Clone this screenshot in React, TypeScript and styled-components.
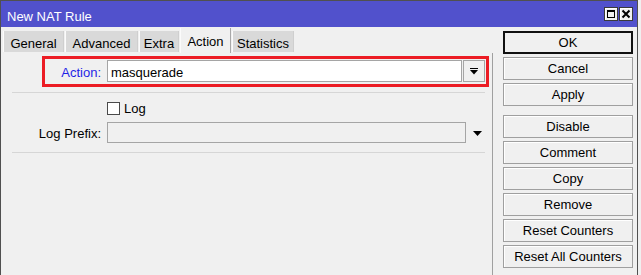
import * as React from "react";
import styled, { createGlobalStyle } from "styled-components";

const GlobalStyle = createGlobalStyle`
  html, body {
    margin: 0;
    padding: 0;
    background: #f0f0f0;
  }
  body {
    font: 400 13px/15px "Liberation Sans", Arial, sans-serif;
    color: #000;
  }
`;

const Window = styled.div`
  width: 638px;
  height: 275px;
  box-sizing: border-box;
  border: 1px solid #505050;
  border-bottom: none;
  background: #f0f0f0;
  display: flex;
  flex-direction: column;
  overflow: hidden;
`;

const TitleBar = styled.div`
  height: 26px;
  flex: none;
  background: #5151cc;
  display: flex;
  justify-content: space-between;
  align-items: flex-start;
  padding: 0 4px 0 6px;
`;

const TitleText = styled.span`
  color: #fff;
  margin-top: 8px;
  line-height: 15px;
`;

const TitleButtons = styled.div`
  display: flex;
  gap: 0;
  margin-top: 6px;
`;

const TitleButton = styled.div`
  width: 14px;
  height: 14px;
  box-sizing: border-box;
  border: 1px solid #3a3a3a;
  background: #f0f0f0;
  box-shadow: inset 1px 1px 0 #fff;
  display: flex;
  align-items: center;
  justify-content: center;
  & + & {
    margin-left: 1px;
  }
`;

const Body = styled.div`
  flex: 1;
  display: flex;
  min-height: 0;
`;

const TabArea = styled.div`
  width: 490px;
  margin-left: 2px;
  display: flex;
  flex-direction: column;
`;

const TabStrip = styled.div`
  height: 26px;
  flex: none;
  display: flex;
  align-items: flex-end;
  gap: 1px;
`;

const Tab = styled.div<{ $width: number; $active?: boolean }>`
  width: ${p => p.$width}px;
  box-sizing: border-box;
  text-align: center;
  line-height: 15px;
  height: ${p => (p.$active ? 25 : 21)}px;
  padding-top: ${p => (p.$active ? 6 : 5)}px;
  margin-bottom: ${p => (p.$active ? 0 : 1)}px;
  background: ${p => (p.$active ? "#f0f0f0" : "#d9d9d9")};
  border-left: 1px solid #fbfbfb;
  border-right: 1px solid ${p => (p.$active ? "#a8a8a8" : "#cfcfcf")};
  white-space: nowrap;
`;

const Panel = styled.div`
  flex: 1;
  border-right: 1px solid #a0a0a0;
  display: flex;
  flex-direction: column;
`;

const HighlightFrame = styled.div`
  margin: 3px 0 0 39px;
  width: 447px;
  height: 31px;
  box-sizing: border-box;
  border: 3px solid #ec1c24;
  padding-top: 1px;
`;

const FieldRow = styled.div<{ $labelWidth: number }>`
  display: grid;
  grid-template-columns: ${p => p.$labelWidth}px auto auto;
  column-gap: 6px;
  align-items: center;
  justify-content: start;
`;

const Label = styled.span<{ $accent?: boolean }>`
  text-align: right;
  color: ${p => (p.$accent ? "#1f1fe6" : "#000")};
  white-space: nowrap;
  padding-top: 2px;
`;

const InputGroup = styled.div`
  display: flex;
  align-items: center;
`;

const TextField = styled.div<{ $width: number; $height: number; $disabled?: boolean }>`
  width: ${p => p.$width}px;
  height: ${p => p.$height}px;
  box-sizing: border-box;
  border: 1px solid #a5a5a5;
  background: ${p => (p.$disabled ? "#f0f0f0" : "#fff")};
  padding: 4px 0 0 3px;
  line-height: 15px;
`;

const DropButton = styled.div`
  width: 22px;
  height: 22px;
  box-sizing: border-box;
  margin-left: 1px;
  border: 1px solid #a5a5a5;
  background: #f0f0f0;
  display: flex;
  align-items: center;
  justify-content: center;
`;

const PlainArrow = styled.div`
  width: 22px;
  display: flex;
  justify-content: center;
  padding-top: 2px;
`;

const Separator = styled.div<{ $top: number }>`
  margin: ${p => p.$top}px 0 0 9px;
  width: 473px;
  border-top: 1px solid #d6d6d6;
`;

const CheckRow = styled.label`
  display: flex;
  align-items: center;
  gap: 4px;
  margin: 8px 0 0 104px;
  height: 14px;
`;

const CheckBox = styled.span`
  width: 13px;
  height: 13px;
  box-sizing: border-box;
  border: 1px solid #4a4a4a;
  background: #fff;
`;

const ButtonColumn = styled.div`
  width: 130px;
  margin-left: 10px;
  padding-top: 4px;
  display: flex;
  flex-direction: column;
  gap: 3px;
`;

const ActionButton = styled.div<{ $primary?: boolean; $groupStart?: boolean }>`
  height: 23px;
  box-sizing: border-box;
  border: ${p => (p.$primary ? "2px solid #111" : "1px solid #9f9f9f")};
  background: #f0f0f0;
  box-shadow: ${p => (p.$primary ? "none" : "inset 1px 1px 0 #fff")};
  margin-top: ${p => (p.$groupStart ? 6 : 0)}px;
  text-align: center;
  line-height: ${p => (p.$primary ? 19 : 21)}px;
  white-space: nowrap;
`;

const DropArrowIcon = () => (
  <svg width="8" height="7" viewBox="0 0 8 7">
    <rect x="0" y="0" width="8" height="1" fill="#000" />
    <polygon points="0,2 8,2 4,6.5" fill="#000" />
  </svg>
);

const TriangleIcon = () => (
  <svg width="9" height="5" viewBox="0 0 9 5">
    <polygon points="0,0 9,0 4.5,5" fill="#000" />
  </svg>
);

const MaximizeIcon = () => (
  <svg width="10" height="10" viewBox="0 0 10 10">
    <rect x="1.5" y="1.5" width="7" height="7" fill="none" stroke="#000" strokeWidth="1" />
    <rect x="1" y="1" width="8" height="2" fill="#000" />
  </svg>
);

const CloseIcon = () => (
  <svg width="10" height="10" viewBox="0 0 10 10">
    <path d="M1.5 1.5 L8.5 8.5 M8.5 1.5 L1.5 8.5" stroke="#000" strokeWidth="2" />
  </svg>
);

const tabs = [
  { name: "General", width: 61 },
  { name: "Advanced", width: 73 },
  { name: "Extra", width: 40 },
  { name: "Action", width: 51, active: true },
  { name: "Statistics", width: 62 },
];

const buttons = [
  { label: "OK", primary: true },
  { label: "Cancel" },
  { label: "Apply" },
  { label: "Disable", groupStart: true },
  { label: "Comment" },
  { label: "Copy" },
  { label: "Remove" },
  { label: "Reset Counters" },
  { label: "Reset All Counters" },
];

export default function App() {
  return (
    <>
      <GlobalStyle />
      <Window>
        <TitleBar>
          <TitleText>New NAT Rule</TitleText>
          <TitleButtons>
            <TitleButton>
              <MaximizeIcon />
            </TitleButton>
            <TitleButton>
              <CloseIcon />
            </TitleButton>
          </TitleButtons>
        </TitleBar>
        <Body>
          <TabArea>
            <TabStrip>
              {tabs.map(t => (
                <Tab key={t.name} $width={t.width} $active={t.active}>
                  {t.name}
                </Tab>
              ))}
            </TabStrip>
            <Panel>
              <HighlightFrame>
                <FieldRow $labelWidth={56}>
                  <Label $accent>Action:</Label>
                  <InputGroup>
                    <TextField $width={355} $height={22}>
                      masquerade
                    </TextField>
                    <DropButton>
                      <DropArrowIcon />
                    </DropButton>
                  </InputGroup>
                </FieldRow>
              </HighlightFrame>
              <Separator $top={5} />
              <CheckRow>
                <CheckBox />
                <span>Log</span>
              </CheckRow>
              <div style={{ height: 7 }} />
              <FieldRow $labelWidth={98}>
                <Label>Log Prefix:</Label>
                <InputGroup>
                  <TextField $width={359} $height={21} $disabled />
                  <PlainArrow>
                    <TriangleIcon />
                  </PlainArrow>
                </InputGroup>
              </FieldRow>
              <Separator $top={9} />
            </Panel>
          </TabArea>
          <ButtonColumn>
            {buttons.map(b => (
              <ActionButton key={b.label} $primary={b.primary} $groupStart={b.groupStart}>
                {b.label}
              </ActionButton>
            ))}
          </ButtonColumn>
        </Body>
      </Window>
    </>
  );
}
